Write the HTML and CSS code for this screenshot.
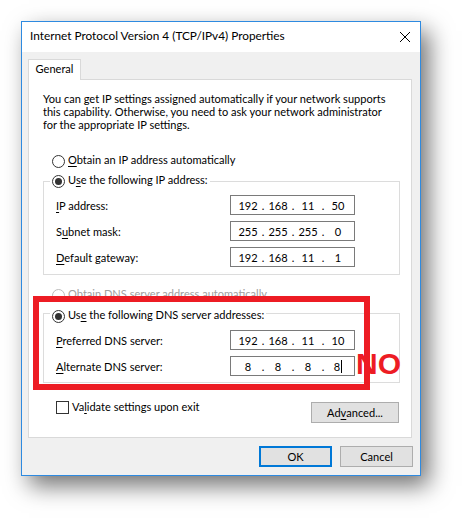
FILE: index.html
```html
<!DOCTYPE html>
<html>
<head>
<meta charset="utf-8">
<link rel="stylesheet" href="styles.css">
</head>
<body>
<div class="screen">
  <div class="window">
    <div class="titlebar">
      <span class="title">Internet Protocol Version 4 (TCP/IPv4) Properties</span>
      <span class="close"><svg width="10" height="10" viewBox="0 0 10 10"><path d="M0 0L10 10M10 0L0 10" stroke="#000" stroke-width="1" fill="none"/></svg></span>
    </div>
    <div class="body">
      <div class="tabs"><div class="tab">General</div></div>
      <div class="panel">
        <p class="intro">You can get IP settings assigned automatically if your network supports<br>this capability. Otherwise, you need to ask your network administrator<br>for the appropriate IP settings.</p>

        <div class="option option-ip"><span class="radio"></span><span class="option-text"><u>O</u>btain an IP address automatically</span></div>

        <div class="group group-ip">
          <div class="group-head head-ip"><span class="radio checked"></span><span class="option-text">U<u>s</u>e the following IP address:</span></div>
          <div class="field field-first">
            <span class="label"><u>I</u>P address:</span>
            <div class="ip"><span class="oct">192</span><span class="dot">.</span><span class="oct">168</span><span class="dot">.</span><span class="oct">11</span><span class="dot">.</span><span class="oct">50</span></div>
          </div>
          <div class="field">
            <span class="label">S<u>u</u>bnet mask:</span>
            <div class="ip"><span class="oct">255</span><span class="dot">.</span><span class="oct">255</span><span class="dot">.</span><span class="oct">255</span><span class="dot">.</span><span class="oct">0</span></div>
          </div>
          <div class="field">
            <span class="label"><u>D</u>efault gateway:</span>
            <div class="ip"><span class="oct">192</span><span class="dot">.</span><span class="oct">168</span><span class="dot">.</span><span class="oct">11</span><span class="dot">.</span><span class="oct">1</span></div>
          </div>
        </div>

        <div class="option option-dns disabled"><span class="radio"></span><span class="option-text">O<u>b</u>tain DNS server address automatically</span></div>

        <div class="group group-dns">
          <div class="group-head head-dns"><span class="radio checked"></span><span class="option-text">Us<u>e</u> the following DNS server addresses:</span></div>
          <div class="field field-first">
            <span class="label"><u>P</u>referred DNS server:</span>
            <div class="ip"><span class="oct">192</span><span class="dot">.</span><span class="oct">168</span><span class="dot">.</span><span class="oct">11</span><span class="dot">.</span><span class="oct">10</span></div>
          </div>
          <div class="field">
            <span class="label"><u>A</u>lternate DNS server:</span>
            <div class="ip"><span class="oct">8</span><span class="dot">.</span><span class="oct">8</span><span class="dot">.</span><span class="oct">8</span><span class="dot">.</span><span class="oct">8<span class="caret"></span></span></div>
          </div>
        </div>

        <div class="bottom-row">
          <div class="check-option"><span class="checkbox"></span><span class="option-text">Va<u>l</u>idate settings upon exit</span></div>
          <div class="button button-advanced">Ad<u>v</u>anced...</div>
        </div>
      </div>
      <div class="footer">
        <div class="button button-ok">OK</div>
        <div class="button">Cancel</div>
      </div>
    </div>
  </div>
  <div class="highlight"></div>
  <div class="no-label">NO</div>
</div>
</body>
</html>
```

FILE: styles.css
```css
* { box-sizing: border-box; }
html, body { margin: 0; padding: 0; background: #fff; }
body {
  width: 463px;
  height: 518px;
  overflow: hidden;
  font-family: Lato, "Segoe UI", sans-serif;
  font-size: 11.05px;
  color: #000;
}
u { text-decoration: underline; text-underline-offset: 2px; text-decoration-thickness: 1px; }

.screen {
  position: relative;
  width: 463px;
  height: 518px;
  padding: 21px 0 0 21px;
}

.window {
  width: 400px;
  height: 455px;
  border: 1px solid #2e8ae0;
  background: #f0f0f0;
  display: flex;
  flex-direction: column;
  box-shadow: 8px 10px 22px rgba(0, 0, 0, 0.55);
}

.titlebar {
  height: 30px;
  flex: none;
  background: #fff;
  display: flex;
  align-items: center;
  justify-content: space-between;
  padding-left: 8px;
}
.title {
  font-size: 11.8px;
  line-height: 16px;
  margin-bottom: 2px;
  white-space: nowrap;
}
.close {
  width: 30px;
  height: 30px;
  display: flex;
  align-items: center;
  justify-content: center;
}
.close svg { display: block; }

.body {
  flex: 1;
  min-height: 0;
  display: flex;
  flex-direction: column;
  padding: 7px 7px 8px 6px;
}

.tabs {
  display: flex;
  flex: none;
  height: 21px;
  margin-bottom: -1px;
  position: relative;
  z-index: 1;
}
.tab {
  width: 53px;
  height: 21px;
  background: #fff;
  border: 1px solid #d9d9d9;
  border-bottom: none;
  text-align: center;
  line-height: 17px;
}

.panel {
  flex: 1;
  min-height: 0;
  background: #fff;
  border: 1px solid #d9d9d9;
  margin-right: 1px;
  padding: 12px 11px 0 14px;
  display: flex;
  flex-direction: column;
}

.intro {
  margin: 0;
  line-height: 13px;
  white-space: nowrap;
}

.option, .group-head, .check-option {
  display: flex;
  align-items: flex-start;
  gap: 3px;
}
.option-text { line-height: 13px; white-space: nowrap; }

.radio {
  width: 13px;
  height: 13px;
  margin-top: 2px;
  border: 1px solid #333;
  border-radius: 50%;
  background: #fff;
  display: flex;
  align-items: center;
  justify-content: center;
  flex: none;
}
.radio.checked::after {
  content: "";
  width: 7px;
  height: 7px;
  border-radius: 50%;
  background: #333;
}

.option-ip { margin: 22px 0 0 9px; }
.option-dns { margin: 12px 0 0 9px; }
.disabled { color: #a0a0a0; }
.disabled .radio { border-color: #bcbcbc; }

.group {
  border: 1px solid #dcdcdc;
  display: flex;
  flex-direction: column;
}
.group-ip { margin-top: 13px; padding-bottom: 7px; }
.group-dns { margin-top: 11px; padding-bottom: 6px; }

.group-head {
  align-self: flex-start;
  background: #fff;
  margin-left: 6px;
  padding: 0 2px;
}
.head-ip { margin-top: -9px; }
.head-dns { margin-top: -6px; }

.field {
  display: flex;
  align-items: center;
  height: 20px;
  margin-top: 6px;
}
.field-first { margin-top: 7px; }
.label {
  width: 186px;
  padding-left: 12px;
  line-height: 13px;
  white-space: nowrap;
}
.ip {
  width: 125px;
  height: 20px;
  border: 1px solid #7a7a7a;
  padding-left: 6px;
  display: flex;
  align-items: center;
  line-height: 13px;
}
.oct {
  width: 22px;
  display: flex;
  justify-content: center;
  align-items: center;
}
.dot { width: 8px; text-align: center; }
.caret {
  width: 1px;
  height: 13px;
  background: #000;
  margin-left: 1px;
}

.bottom-row {
  display: flex;
  justify-content: space-between;
  align-items: flex-start;
  margin-top: 17px;
  padding-left: 13px;
}
.checkbox {
  width: 13px;
  height: 13px;
  margin-top: 1px;
  border: 1px solid #333;
  background: #fff;
  flex: none;
}

.button {
  width: 73px;
  height: 21px;
  border: 1px solid #adadad;
  background: #e1e1e1;
  display: flex;
  align-items: center;
  justify-content: center;
  line-height: 13px;
  flex: none;
}
.button-advanced {
  width: 88px;
  margin-top: 2px;
  margin-right: 1px;
}
.button-ok { border: 2px solid #0078d7; }

.footer {
  display: flex;
  flex: none;
  justify-content: flex-end;
  gap: 8px;
  margin-top: 8px;
}

.highlight {
  position: absolute;
  left: 33px;
  top: 296px;
  width: 337px;
  height: 94px;
  border: 6px solid #ed1c24;
}
.no-label {
  position: absolute;
  left: 356px;
  top: 349px;
  font-family: "Liberation Sans", Arial, sans-serif;
  font-weight: bold;
  font-size: 30px;
  line-height: 30px;
  color: #ed1c24;
}
```
